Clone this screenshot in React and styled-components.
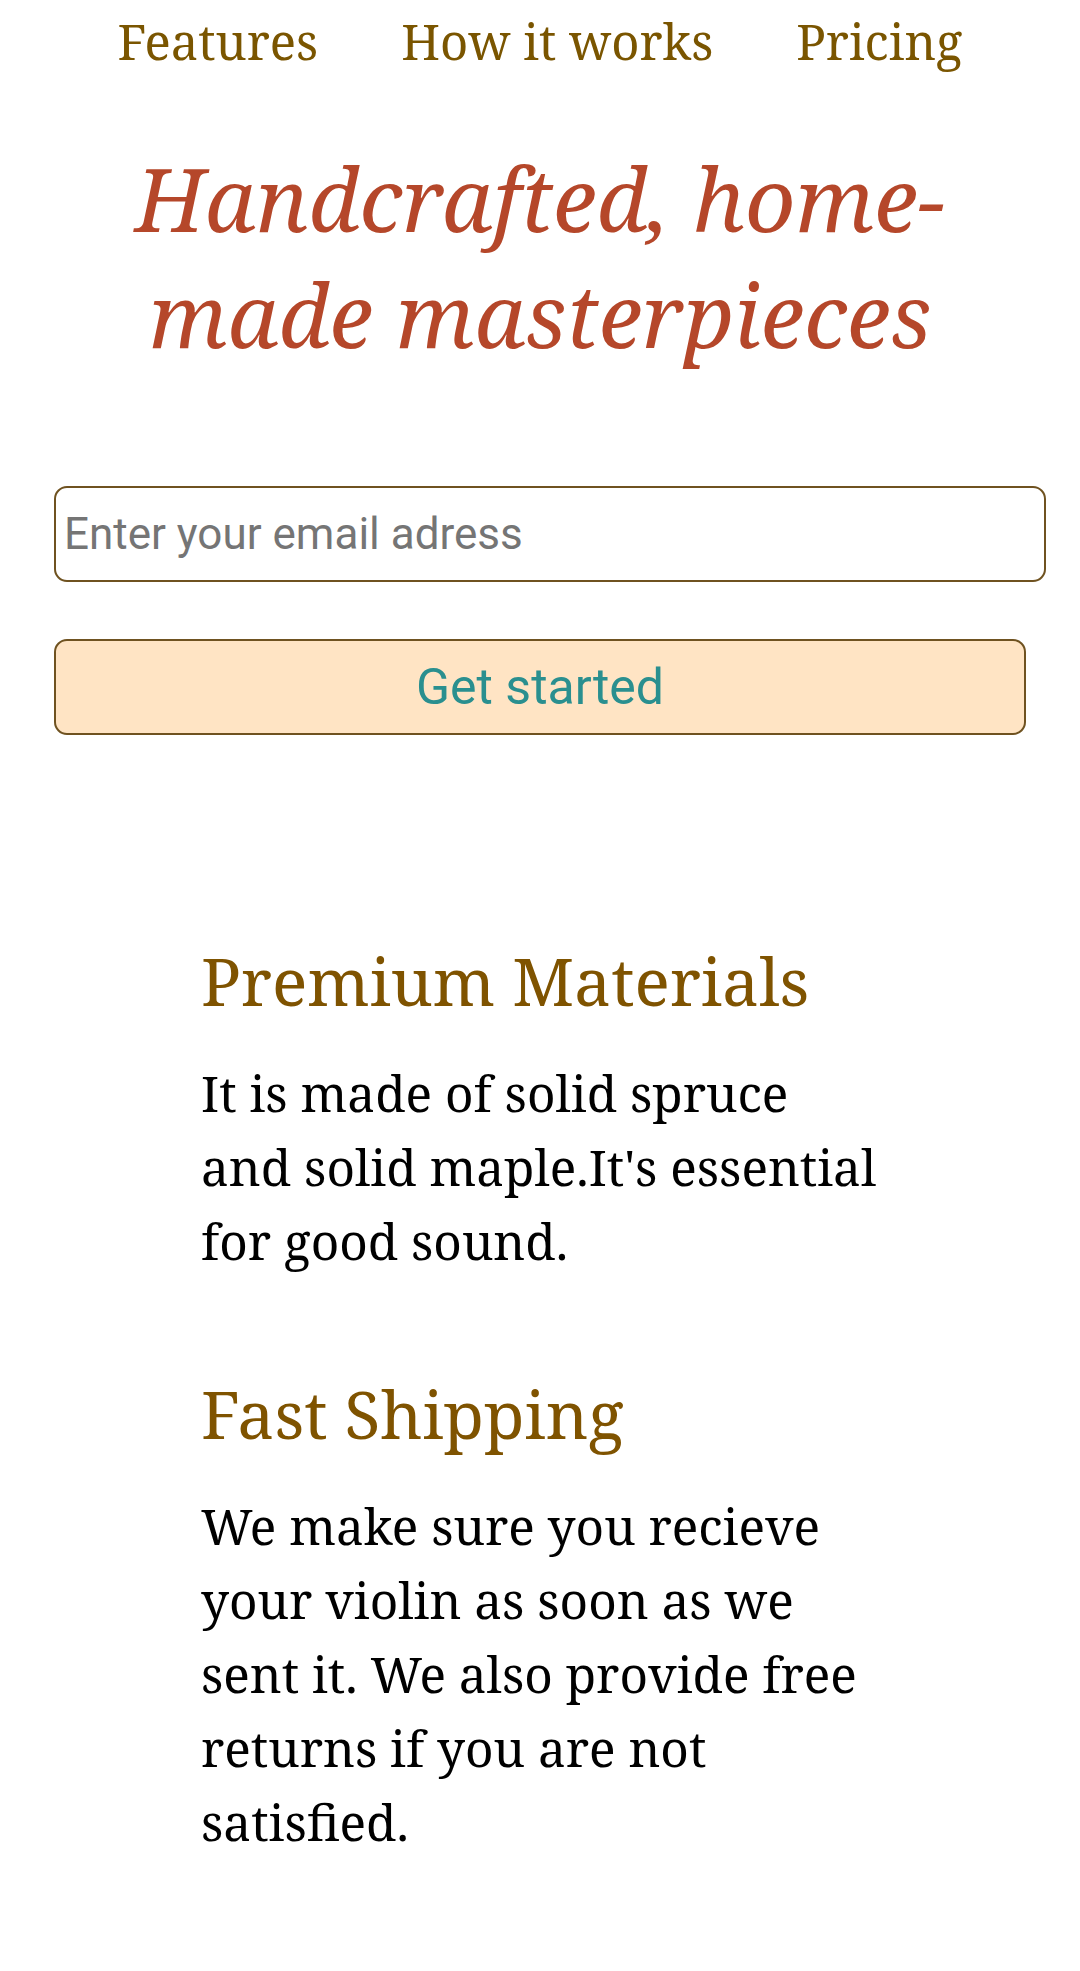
import React from 'react';
import styled, { createGlobalStyle } from 'styled-components';

const GlobalStyle = createGlobalStyle`
  body {
    margin: 0;
    background: #fff;
    font-family: "Noto Serif", "DejaVu Serif", serif;
  }
`;

const App = () => {
  return (
    <Page>
      <GlobalStyle />
      <Nav>
        <NavLink>Features</NavLink>
        <NavLink>How it works</NavLink>
        <NavLink>Pricing</NavLink>
      </Nav>

      <Title>Handcrafted, home-made masterpieces</Title>

      <Form>
        <EmailInput type="email" placeholder="Enter your email adress" />
        <StartButton>Get started</StartButton>
      </Form>

      <Features>
        <Feature>
          <FeatureTitle>Premium Materials</FeatureTitle>
          <FeatureText>
            It is made of solid spruce and solid maple.It's essential for good sound.
          </FeatureText>
        </Feature>
        <Feature>
          <FeatureTitle>Fast Shipping</FeatureTitle>
          <FeatureText>
            We make sure you recieve your violin as soon as we sent it. We also provide free returns if you are not satisfied.
          </FeatureText>
        </Feature>
      </Features>
    </Page>
  );
};

const Page = styled.div`
  width: 1080px;
  min-height: 1971px;
  box-sizing: border-box;
`;

const Nav = styled.nav`
  display: flex;
  justify-content: center;
  gap: 83px;
  padding: 9px 0 0;
`;

const NavLink = styled.a`
  font-size: 49px;
  line-height: 64px;
  color: #7a5500;
  cursor: pointer;
`;

const Title = styled.h1`
  margin: 67px auto 0;
  width: 880px;
  text-align: center;
  font-size: 88px;
  line-height: 116px;
  font-style: italic;
  font-weight: 400;
  color: #b5472a;
`;

const Form = styled.div`
  display: flex;
  flex-direction: column;
  gap: 57px;
  padding: 0 54px;
  margin-top: 114px;
`;

const EmailInput = styled.input`
  width: 992px;
  height: 96px;
  box-sizing: border-box;
  padding: 0 8px;
  border: 2.6px solid #6f5220;
  border-radius: 13px;
  font-family: Roboto, "Noto Sans", sans-serif;
  font-size: 44px;
  color: #333;
  outline: none;

  &::placeholder {
    color: #757575;
  }
`;

const StartButton = styled.button`
  width: 972px;
  height: 96px;
  box-sizing: border-box;
  border: 2.6px solid #6f5220;
  border-radius: 13px;
  background-color: #ffe4c4;
  color: #2a8f8f;
  font-family: Roboto, "Noto Sans", sans-serif;
  font-size: 50px;
  cursor: pointer;
`;

const Features = styled.section`
  display: flex;
  flex-direction: column;
  gap: 90px;
  padding: 0 201px;
  margin-top: 200px;
`;

const Feature = styled.div``;

const FeatureTitle = styled.h2`
  margin: 0 0 31px;
  font-size: 66px;
  line-height: 90px;
  font-weight: 400;
  color: #7f5300;
`;

const FeatureText = styled.p`
  margin: 0;
  font-size: 49.5px;
  line-height: 74px;
  color: #000;
`;

export default App;
